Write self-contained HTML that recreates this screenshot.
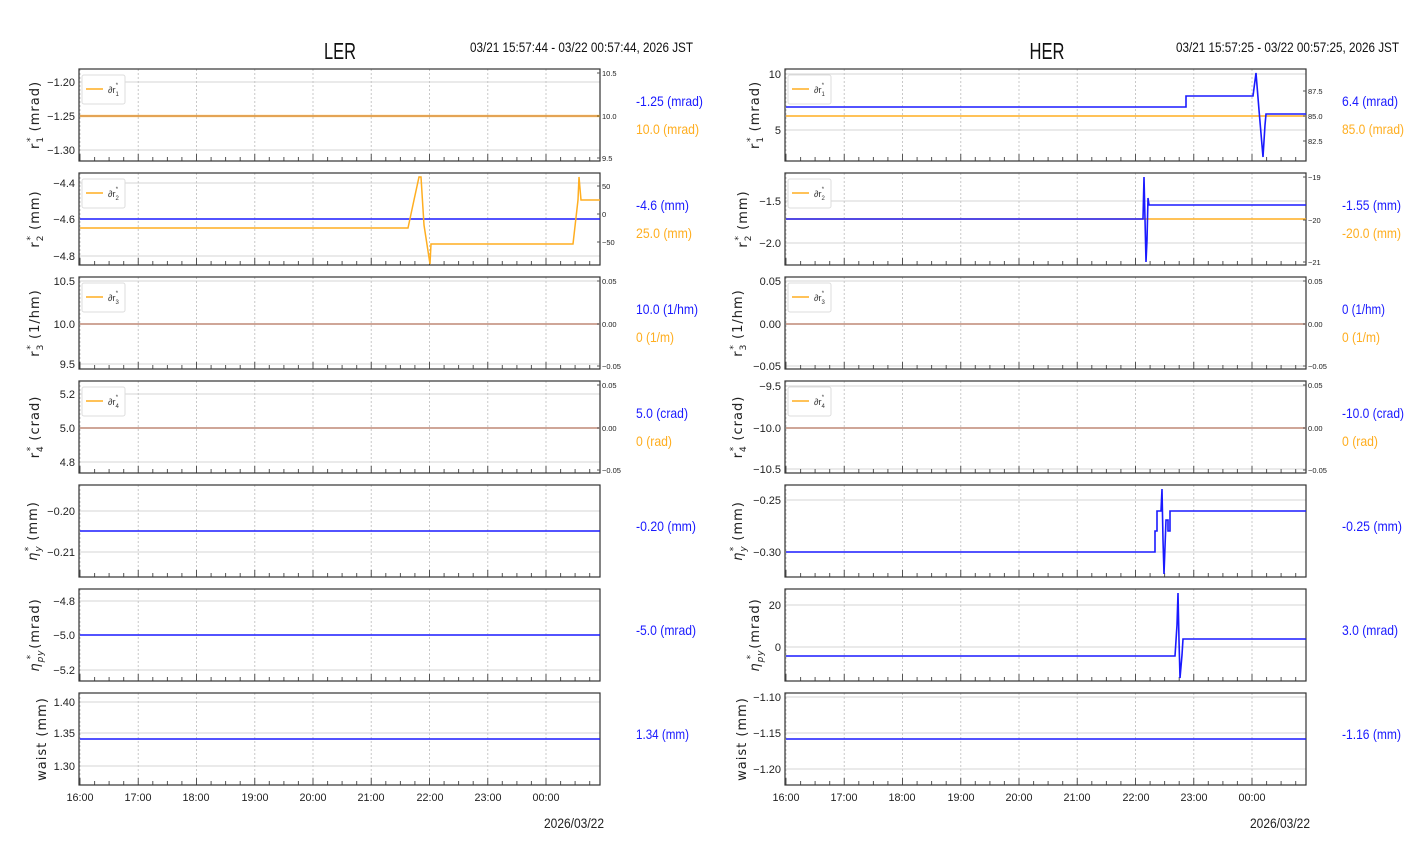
<!DOCTYPE html>
<html><head><meta charset="utf-8"><style>
html,body{margin:0;padding:0;background:#fff;width:1412px;height:864px;overflow:hidden}
svg{display:block}
.t{font-family:"Liberation Sans",sans-serif;font-size:11px;fill:#222}
.tr{font-family:"Liberation Sans",sans-serif;font-size:7.5px;fill:#222}
.yl{font-family:"DejaVu Sans","Liberation Sans",sans-serif;font-size:13px;fill:#222;letter-spacing:1px}
.vb{font-family:"Liberation Sans",sans-serif;font-size:14px;fill:#1a1aff}
.vo{font-family:"Liberation Sans",sans-serif;font-size:14px;fill:#ffae20}
.lg{font-family:"Liberation Sans",sans-serif;font-size:9px;fill:#333}
.hg{stroke:#d4d4d4;stroke-width:1}
.b{stroke:#1a1aff;stroke-width:1.6;fill:none}
.o{stroke:#ffae20;stroke-width:1.5;fill:none}
</style></head><body>
<svg width="1412" height="864" viewBox="0 0 1412 864" xmlns="http://www.w3.org/2000/svg">
<defs>
<g id="fr">
<path d="M1 0V92M59.25 0V92M117.5 0V92M175.75 0V92M234 0V92M292.25 0V92M350.5 0V92M408.75 0V92M467 0V92" stroke="#c8c8c8" stroke-width="1" stroke-dasharray="2,2"/>
<path d="M1 92V85M59.25 92V85M117.5 92V85M175.75 92V85M234 92V85M292.25 92V85M350.5 92V85M408.75 92V85M467 92V85M15.6 92V88M30.1 92V88M44.7 92V88M73.8 92V88M88.4 92V88M102.9 92V88M132.1 92V88M146.6 92V88M161.2 92V88M190.3 92V88M204.9 92V88M219.4 92V88M248.6 92V88M263.1 92V88M277.7 92V88M306.8 92V88M321.4 92V88M335.9 92V88M365.1 92V88M379.6 92V88M394.2 92V88M423.3 92V88M437.9 92V88M452.4 92V88M481.6 92V88M496.1 92V88M510.7 92V88" stroke="#555" stroke-width="1"/>
<rect x="0" y="0" width="521" height="92" fill="none" stroke="#333" stroke-width="1.2"/>
</g>
<g id="leg">
<rect x="3" y="6" width="43" height="29" fill="#fff" stroke="#ddd" rx="2"/>
<line x1="7" y1="20" x2="24" y2="20" stroke="#ffae20" stroke-width="1.5"/>
</g>
</defs>

<text x="340" y="59" text-anchor="middle" textLength="32" lengthAdjust="spacingAndGlyphs" style="font-family:'Liberation Sans',sans-serif;font-size:23px;fill:#111">LER</text>
<text x="470" y="52" textLength="223" lengthAdjust="spacingAndGlyphs" style="font-family:'Liberation Sans',sans-serif;font-size:14px;fill:#111">03/21 15:57:44 - 03/22 00:57:44, 2026 JST</text>
<text x="1047" y="59" text-anchor="middle" textLength="35" lengthAdjust="spacingAndGlyphs" style="font-family:'Liberation Sans',sans-serif;font-size:23px;fill:#111">HER</text>
<text x="1176" y="52" textLength="223" lengthAdjust="spacingAndGlyphs" style="font-family:'Liberation Sans',sans-serif;font-size:14px;fill:#111">03/21 15:57:25 - 03/22 00:57:25, 2026 JST</text>

<!-- LEFT -->
<path class="hg" d="M79 82H600M79 116H600M79 150H600 M79 183H600M79 219H600M79 256H600 M79 281H600M79 324H600M79 364H600 M79 394H600M79 428H600M79 462H600 M79 511H600M79 552H600 M79 601H600M79 635H600M79 670H600 M79 702H600M79 733H600M79 766H600"/>
<use href="#fr" x="79" y="69"/><use href="#fr" x="79" y="173"/><use href="#fr" x="79" y="277"/><use href="#fr" x="79" y="381"/><use href="#fr" x="79" y="485"/><use href="#fr" x="79" y="589"/><use href="#fr" x="79" y="693"/>

<path d="M80 116H600" stroke="#ffae20" stroke-width="2.2"/><path d="M80 116H600" stroke="#c89a8a" stroke-width="1"/>
<path class="b" d="M80 219H600"/>
<path class="o" d="M80 228H408L414 200L419 177L421 177L424 225L430 264L431 244H573L578 200L579 177L581 200H600"/>
<path d="M80 324H600" stroke="#c89a8a" stroke-width="1.8"/>
<path d="M80 428H600" stroke="#c89a8a" stroke-width="1.8"/>
<path class="b" d="M80 531H600"/>
<path class="b" d="M80 635H600"/>
<path class="b" d="M80 739H600"/>

<use href="#leg" x="79" y="69"/><text class="lg" x="108" y="93">∂r<tspan font-size="6" dy="3">1</tspan><tspan font-size="6" dx="-3" dy="-9">*</tspan></text>
<use href="#leg" x="79" y="173"/><text class="lg" x="108" y="197">∂r<tspan font-size="6" dy="3">2</tspan><tspan font-size="6" dx="-3" dy="-9">*</tspan></text>
<use href="#leg" x="79" y="277"/><text class="lg" x="108" y="301">∂r<tspan font-size="6" dy="3">3</tspan><tspan font-size="6" dx="-3" dy="-9">*</tspan></text>
<use href="#leg" x="79" y="381"/><text class="lg" x="108" y="405">∂r<tspan font-size="6" dy="3">4</tspan><tspan font-size="6" dx="-3" dy="-9">*</tspan></text>

<g class="t" text-anchor="end">
<text x="75" y="86">−1.20</text><text x="75" y="120">−1.25</text><text x="75" y="154">−1.30</text>
<text x="75" y="187">−4.4</text><text x="75" y="223">−4.6</text><text x="75" y="260">−4.8</text>
<text x="75" y="285">10.5</text><text x="75" y="328">10.0</text><text x="75" y="368">9.5</text>
<text x="75" y="398">5.2</text><text x="75" y="432">5.0</text><text x="75" y="466">4.8</text>
<text x="75" y="515">−0.20</text><text x="75" y="556">−0.21</text>
<text x="75" y="605">−4.8</text><text x="75" y="639">−5.0</text><text x="75" y="674">−5.2</text>
<text x="75" y="706">1.40</text><text x="75" y="737">1.35</text><text x="75" y="770">1.30</text>
</g>
<g class="tr">
<text x="602" y="76">10.5</text><text x="602" y="119">10.0</text><text x="602" y="161">9.5</text>
<text x="602" y="189">50</text><text x="602" y="217">0</text><text x="602" y="245">−50</text>
<text x="602" y="284">0.05</text><text x="602" y="327">0.00</text><text x="602" y="369">−0.05</text>
<text x="602" y="388">0.05</text><text x="602" y="431">0.00</text><text x="602" y="473">−0.05</text>
</g>
<path d="M600 73h-3M600 116h-3M600 158h-3M600 186h-3M600 214h-3M600 242h-3M600 281h-3M600 324h-3M600 366h-3M600 385h-3M600 428h-3M600 470h-3" stroke="#555"/>

<g class="yl" text-anchor="middle">
<text transform="translate(39,115) rotate(-90)">r<tspan font-size="9" dy="4">1</tspan><tspan font-size="9" dx="-6" dy="-10">*</tspan><tspan dy="6"> (mrad)</tspan></text>
<text transform="translate(39,219) rotate(-90)">r<tspan font-size="9" dy="4">2</tspan><tspan font-size="9" dx="-6" dy="-10">*</tspan><tspan dy="6"> (mm)</tspan></text>
<text transform="translate(39,323) rotate(-90)">r<tspan font-size="9" dy="4">3</tspan><tspan font-size="9" dx="-6" dy="-10">*</tspan><tspan dy="6"> (1/hm)</tspan></text>
<text transform="translate(39,427) rotate(-90)">r<tspan font-size="9" dy="4">4</tspan><tspan font-size="9" dx="-6" dy="-10">*</tspan><tspan dy="6"> (crad)</tspan></text>
<text transform="translate(37,531) rotate(-90)"><tspan font-style="italic">η</tspan><tspan font-size="9" dy="4" font-style="italic">y</tspan><tspan font-size="9" dx="-6" dy="-10">*</tspan><tspan dy="6"> (mm)</tspan></text>
<text transform="translate(39,635) rotate(-90)"><tspan font-style="italic">η</tspan><tspan font-size="9" dy="4" font-style="italic">py</tspan><tspan font-size="9" dx="-10" dy="-10">*</tspan><tspan dy="6"> (mrad)</tspan></text>
<text transform="translate(46,739) rotate(-90)">waist (mm)</text>
</g>

<g lengthAdjust="spacingAndGlyphs">
<text class="vb" x="636" y="106" textLength="67" lengthAdjust="spacingAndGlyphs">-1.25 (mrad)</text><text class="vo" x="636" y="134" textLength="63" lengthAdjust="spacingAndGlyphs">10.0 (mrad)</text>
<text class="vb" x="636" y="210" textLength="53" lengthAdjust="spacingAndGlyphs">-4.6 (mm)</text><text class="vo" x="636" y="238" textLength="56" lengthAdjust="spacingAndGlyphs">25.0 (mm)</text>
<text class="vb" x="636" y="314" textLength="62" lengthAdjust="spacingAndGlyphs">10.0 (1/hm)</text><text class="vo" x="636" y="342" textLength="38" lengthAdjust="spacingAndGlyphs">0 (1/m)</text>
<text class="vb" x="636" y="418" textLength="52" lengthAdjust="spacingAndGlyphs">5.0 (crad)</text><text class="vo" x="636" y="446" textLength="36" lengthAdjust="spacingAndGlyphs">0 (rad)</text>
<text class="vb" x="636" y="531" textLength="60" lengthAdjust="spacingAndGlyphs">-0.20 (mm)</text>
<text class="vb" x="636" y="635" textLength="60" lengthAdjust="spacingAndGlyphs">-5.0 (mrad)</text>
<text class="vb" x="636" y="739" textLength="53" lengthAdjust="spacingAndGlyphs">1.34 (mm)</text>
</g>

<g class="t" text-anchor="middle">
<text x="80" y="801" textLength="27" lengthAdjust="spacingAndGlyphs">16:00</text><text x="138" y="801" textLength="27" lengthAdjust="spacingAndGlyphs">17:00</text><text x="196" y="801" textLength="27" lengthAdjust="spacingAndGlyphs">18:00</text><text x="255" y="801" textLength="27" lengthAdjust="spacingAndGlyphs">19:00</text><text x="313" y="801" textLength="27" lengthAdjust="spacingAndGlyphs">20:00</text><text x="371" y="801" textLength="27" lengthAdjust="spacingAndGlyphs">21:00</text><text x="430" y="801" textLength="27" lengthAdjust="spacingAndGlyphs">22:00</text><text x="488" y="801" textLength="27" lengthAdjust="spacingAndGlyphs">23:00</text><text x="546" y="801" textLength="27" lengthAdjust="spacingAndGlyphs">00:00</text>
<text x="574" y="828" style="font-size:14px" textLength="60" lengthAdjust="spacingAndGlyphs">2026/03/22</text>
</g>

<!-- RIGHT -->
<path class="hg" d="M785 74H1306M785 130H1306 M785 201H1306M785 243H1306 M785 281H1306M785 324H1306M785 366H1306 M785 386H1306M785 428H1306M785 469H1306 M785 500H1306M785 552H1306 M785 605H1306M785 647H1306 M785 697H1306M785 733H1306M785 769H1306"/>
<use href="#fr" x="785" y="69"/><use href="#fr" x="785" y="173"/><use href="#fr" x="785" y="277"/><use href="#fr" x="785" y="381"/><use href="#fr" x="785" y="485"/><use href="#fr" x="785" y="589"/><use href="#fr" x="785" y="693"/>

<path class="o" d="M786 116H1306"/>
<path class="b" d="M786 107H1186V96H1253L1256 73L1259 110L1263 157L1265 125L1266 114H1306"/>
<path class="o" d="M786 219H1306"/>
<path class="b" d="M786 219H1143L1144 177L1145 219L1146 262L1147 240L1148 198L1149 205H1306"/>
<path d="M786 324H1306" stroke="#c89a8a" stroke-width="1.8"/>
<path d="M786 428H1306" stroke="#c89a8a" stroke-width="1.8"/>
<path class="b" d="M786 552H1155V531H1157V511H1161L1162 489L1163 540L1164 574L1166 520H1168V531H1170V511H1306"/>
<path class="b" d="M786 656H1175L1177 625L1178 593L1179 640L1180 678L1182 655L1183 639H1306"/>
<path class="b" d="M786 739H1306"/>

<use href="#leg" x="785" y="69"/><text class="lg" x="814" y="93">∂r<tspan font-size="6" dy="3">1</tspan><tspan font-size="6" dx="-3" dy="-9">*</tspan></text>
<use href="#leg" x="785" y="173"/><text class="lg" x="814" y="197">∂r<tspan font-size="6" dy="3">2</tspan><tspan font-size="6" dx="-3" dy="-9">*</tspan></text>
<use href="#leg" x="785" y="277"/><text class="lg" x="814" y="301">∂r<tspan font-size="6" dy="3">3</tspan><tspan font-size="6" dx="-3" dy="-9">*</tspan></text>
<use href="#leg" x="785" y="381"/><text class="lg" x="814" y="405">∂r<tspan font-size="6" dy="3">4</tspan><tspan font-size="6" dx="-3" dy="-9">*</tspan></text>

<g class="t" text-anchor="end">
<text x="781" y="78">10</text><text x="781" y="134">5</text>
<text x="781" y="205">−1.5</text><text x="781" y="247">−2.0</text>
<text x="781" y="285">0.05</text><text x="781" y="328">0.00</text><text x="781" y="370">−0.05</text>
<text x="781" y="390">−9.5</text><text x="781" y="432">−10.0</text><text x="781" y="473">−10.5</text>
<text x="781" y="504">−0.25</text><text x="781" y="556">−0.30</text>
<text x="781" y="609">20</text><text x="781" y="651">0</text>
<text x="781" y="701">−1.10</text><text x="781" y="737">−1.15</text><text x="781" y="773">−1.20</text>
</g>
<g class="tr">
<text x="1308" y="94">87.5</text><text x="1308" y="119">85.0</text><text x="1308" y="144">82.5</text>
<text x="1308" y="180">−19</text><text x="1308" y="223">−20</text><text x="1308" y="265">−21</text>
<text x="1308" y="284">0.05</text><text x="1308" y="327">0.00</text><text x="1308" y="369">−0.05</text>
<text x="1308" y="388">0.05</text><text x="1308" y="431">0.00</text><text x="1308" y="473">−0.05</text>
</g>
<path d="M1306 91h-3M1306 116h-3M1306 141h-3M1306 177h-3M1306 220h-3M1306 262h-3M1306 281h-3M1306 324h-3M1306 366h-3M1306 385h-3M1306 428h-3M1306 470h-3" stroke="#555"/>

<g class="yl" text-anchor="middle">
<text transform="translate(759,115) rotate(-90)">r<tspan font-size="9" dy="4">1</tspan><tspan font-size="9" dx="-6" dy="-10">*</tspan><tspan dy="6"> (mrad)</tspan></text>
<text transform="translate(747,219) rotate(-90)">r<tspan font-size="9" dy="4">2</tspan><tspan font-size="9" dx="-6" dy="-10">*</tspan><tspan dy="6"> (mm)</tspan></text>
<text transform="translate(742,323) rotate(-90)">r<tspan font-size="9" dy="4">3</tspan><tspan font-size="9" dx="-6" dy="-10">*</tspan><tspan dy="6"> (1/hm)</tspan></text>
<text transform="translate(742,427) rotate(-90)">r<tspan font-size="9" dy="4">4</tspan><tspan font-size="9" dx="-6" dy="-10">*</tspan><tspan dy="6"> (crad)</tspan></text>
<text transform="translate(742,531) rotate(-90)"><tspan font-style="italic">η</tspan><tspan font-size="9" dy="4" font-style="italic">y</tspan><tspan font-size="9" dx="-6" dy="-10">*</tspan><tspan dy="6"> (mm)</tspan></text>
<text transform="translate(759,635) rotate(-90)"><tspan font-style="italic">η</tspan><tspan font-size="9" dy="4" font-style="italic">py</tspan><tspan font-size="9" dx="-10" dy="-10">*</tspan><tspan dy="6"> (mrad)</tspan></text>
<text transform="translate(746,739) rotate(-90)">waist (mm)</text>
</g>

<text class="vb" x="1342" y="106" textLength="56" lengthAdjust="spacingAndGlyphs">6.4 (mrad)</text><text class="vo" x="1342" y="134" textLength="62" lengthAdjust="spacingAndGlyphs">85.0 (mrad)</text>
<text class="vb" x="1342" y="210" textLength="59" lengthAdjust="spacingAndGlyphs">-1.55 (mm)</text><text class="vo" x="1342" y="238" textLength="59" lengthAdjust="spacingAndGlyphs">-20.0 (mm)</text>
<text class="vb" x="1342" y="314" textLength="43" lengthAdjust="spacingAndGlyphs">0 (1/hm)</text><text class="vo" x="1342" y="342" textLength="38" lengthAdjust="spacingAndGlyphs">0 (1/m)</text>
<text class="vb" x="1342" y="418" textLength="62" lengthAdjust="spacingAndGlyphs">-10.0 (crad)</text><text class="vo" x="1342" y="446" textLength="36" lengthAdjust="spacingAndGlyphs">0 (rad)</text>
<text class="vb" x="1342" y="531" textLength="60" lengthAdjust="spacingAndGlyphs">-0.25 (mm)</text>
<text class="vb" x="1342" y="635" textLength="56" lengthAdjust="spacingAndGlyphs">3.0 (mrad)</text>
<text class="vb" x="1342" y="739" textLength="59" lengthAdjust="spacingAndGlyphs">-1.16 (mm)</text>

<g class="t" text-anchor="middle">
<text x="786" y="801" textLength="27" lengthAdjust="spacingAndGlyphs">16:00</text><text x="844" y="801" textLength="27" lengthAdjust="spacingAndGlyphs">17:00</text><text x="902" y="801" textLength="27" lengthAdjust="spacingAndGlyphs">18:00</text><text x="961" y="801" textLength="27" lengthAdjust="spacingAndGlyphs">19:00</text><text x="1019" y="801" textLength="27" lengthAdjust="spacingAndGlyphs">20:00</text><text x="1077" y="801" textLength="27" lengthAdjust="spacingAndGlyphs">21:00</text><text x="1136" y="801" textLength="27" lengthAdjust="spacingAndGlyphs">22:00</text><text x="1194" y="801" textLength="27" lengthAdjust="spacingAndGlyphs">23:00</text><text x="1252" y="801" textLength="27" lengthAdjust="spacingAndGlyphs">00:00</text>
<text x="1280" y="828" style="font-size:14px" textLength="60" lengthAdjust="spacingAndGlyphs">2026/03/22</text>
</g>
</svg>
</body></html>
